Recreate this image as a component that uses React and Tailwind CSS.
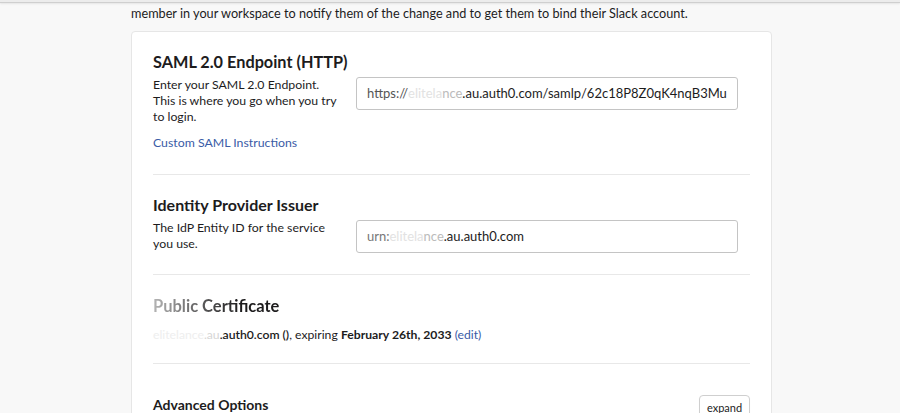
export default function App() {
  return (
    <div
      className="min-h-[413px] h-[413px] overflow-hidden bg-[#f8f8f8] text-[#1d1c1d]"
      style={{ fontFamily: "Lato, 'Open Sans', sans-serif" }}
    >
      {/* top edge */}
      <div className="h-[3px] bg-[#ececec] border-b border-[#cfcfcf] shadow-[0_1px_2px_rgba(0,0,0,0.08)]" />

      <div className="ml-[131px] w-[641px]">
        <p className="text-[12.7px] leading-[16px] mt-[2px] whitespace-nowrap">
          member in your workspace to notify them of the change and to get them to bind their Slack account.
        </p>

        <div className="mt-[10px] bg-white border border-[#e6e6e6] rounded-[4px] px-[21px]">
          {/* SAML endpoint */}
          <section className="pt-[20px] pb-[23px] border-b border-[#e8e8e8]">
            <h3 className="text-[16.3px] leading-[20px] font-bold">SAML 2.0 Endpoint (HTTP)</h3>
            <div className="flex mt-[5px]">
              <div className="w-[188px] shrink-0 text-[12.3px] leading-[16px]">
                Enter your SAML 2.0 Endpoint. This is where you go when you try to login.
              </div>
              <TextInput>
                <span className="text-[#555]">https://</span>
                <span className="text-[#e2e2e2]">elitela</span>
                <span className="text-[#bbb]">nce</span>
                <span>.au.auth0.com/samlp/62c18P8Z0qK4nqB3Mu</span>
              </TextInput>
            </div>
            <a className="block mt-[10px] text-[12.3px] leading-[16px] text-[#3a5ba6]">Custom SAML Instructions</a>
          </section>

          {/* IdP issuer */}
          <section className="pt-[20px] pb-[21px] border-b border-[#e8e8e8]">
            <h3 className="text-[16px] leading-[20px] font-bold">Identity Provider Issuer</h3>
            <div className="flex mt-[5px]">
              <div className="w-[188px] shrink-0 text-[12.3px] leading-[16px]">
                The IdP Entity ID for the service you use.
              </div>
              <TextInput>
                <span className="text-[#777]">urn:</span>
                <span className="text-[#e2e2e2]">elitela</span>
                <span className="text-[#bbb]">nce</span>
                <span>.au.auth0.com</span>
              </TextInput>
            </div>
          </section>

          {/* certificate */}
          <section className="pt-[21px] pb-[20px] border-b border-[#e8e8e8]">
            <h3 className="text-[16.5px] leading-[20px] font-bold bg-gradient-to-r from-[#b5b5b5] to-[#1d1c1d] to-[70%] bg-clip-text text-transparent w-fit">
              Public Certificate
            </h3>
            <p className="mt-[11px] text-[12.2px] leading-[16px]">
              <span className="text-[#eeeeee]">elitelance</span>
              <span className="text-[#d6d6d6]">.au</span>
              <span className="font-semibold">.auth0.com ()</span>, expiring{" "}
              <span className="font-bold">February 26th, 2033</span>{" "}
              <a className="text-[#3a5ba6]">(edit)</a>
            </p>
          </section>

          {/* advanced */}
          <section className="pt-[32px] flex justify-between items-start">
            <h4 className="text-[14px] leading-[18px] font-bold">Advanced Options</h4>
            <button className="w-[51px] h-[26px] -mt-[1px] border border-[#cfcfcf] rounded-[4px] bg-white text-[11px] leading-[14px] text-[#1d1c1d] shadow-[0_1px_1px_rgba(0,0,0,0.05)]">
              expand
            </button>
          </section>
        </div>
      </div>
    </div>
  );
}

function TextInput({ children }) {
  return (
    <div className="ml-[15px] w-[382px] h-[33px] border border-[#c4c4c4] rounded-[3px] px-[10px] flex items-center overflow-hidden whitespace-nowrap text-[13px] bg-white">
      {children}
    </div>
  );
}
